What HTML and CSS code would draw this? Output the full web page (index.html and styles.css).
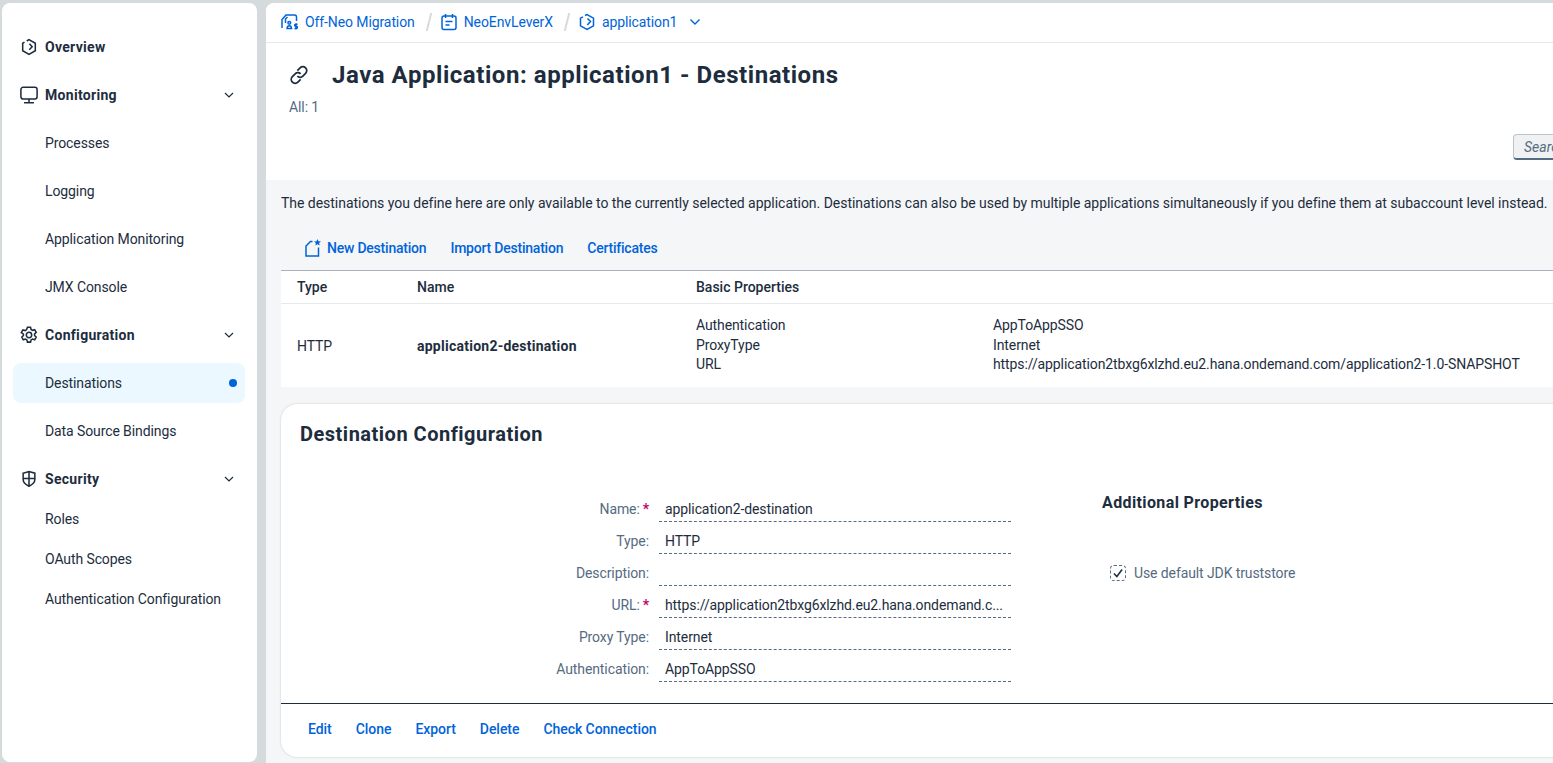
FILE: index.html
```html
<!DOCTYPE html>
<html lang="en">
<head>
<meta charset="utf-8">
<title>Destinations</title>
<link rel="stylesheet" href="styles.css">
</head>
<body>
<div class="shell">
  <nav class="side">
    <a class="nav top"><svg class="nico" viewBox="0 0 20 20"><path d="M7.500 3.300 10 1.800l7 4v8.400l-7 4-7-4V5.800l2-1.200M10.500 6.500l3 3.200-3.200 3.300"/></svg>Overview</a>
    <a class="nav top"><svg class="nico" viewBox="0 0 20 20"><rect x="1" y="1.500" width="18" height="13" rx="2.500"/><path d="M10 14.500v3.500M4.500 18.500h11"/></svg>Monitoring<svg class="chev" viewBox="0 0 12 12"><path d="M2 4l4 4 4-4"/></svg></a>
    <a class="nav sub">Processes</a>
    <a class="nav sub">Logging</a>
    <a class="nav sub">Application Monitoring</a>
    <a class="nav sub">JMX Console</a>
    <a class="nav top"><svg class="nico" viewBox="0 0 20 20"><circle cx="10" cy="10" r="3"/><path d="M8.300 1.500h3.400l.6 2.400 1.600.9 2.400-.7 1.700 3-1.800 1.700v1.800l1.800 1.700-1.700 3-2.400-.7-1.600.9-.6 2.400H8.300l-.6-2.400-1.600-.9-2.400.7-1.700-3 1.800-1.700V9.100L1.500 7.400l1.700-3 2.400.7 1.600-.9z"/></svg>Configuration<svg class="chev" viewBox="0 0 12 12"><path d="M2 4l4 4 4-4"/></svg></a>
    <a class="nav sub active">Destinations<span class="dot"></span></a>
    <a class="nav sub">Data Source Bindings</a>
    <a class="nav top last"><svg class="nico" viewBox="0 0 20 20"><path d="M3.500 3.500 10 1.800l6.500 1.700v7c0 3.500-3 5.800-6.500 7.500-3.500-1.700-6.500-4-6.500-7.500zM10 1.800V18M3.500 9.500h13"/></svg>Security<svg class="chev" viewBox="0 0 12 12"><path d="M2 4l4 4 4-4"/></svg></a>
    <a class="nav sub short">Roles</a>
    <a class="nav sub short">OAuth Scopes</a>
    <a class="nav sub short">Authentication Configuration</a>
  </nav>
  <main class="main">
    <header class="crumbs">
      <a class="crumb"><svg class="cico" viewBox="0 0 18 18"><path d="M1 15V6.500L5 2h8.500a2 2 0 0 1 2 2v4M4.500 10V6l2-2M6 15.500c.2-2 1-2.800 2.300-2.800s2.100.8 2.300 2.800z"/><circle cx="8.300" cy="9.800" r="1.400"/><path d="M16.500 11.200h-2c-1.200 0-1.200 2 0 2h1c1.200 0 1.200 2.200 0 2.200h-2M15 10.200v6.300"/></svg>Off-Neo Migration</a>
      <span class="sep"></span>
      <a class="crumb"><svg class="cico" viewBox="0 0 18 18"><rect x="2" y="3" width="14" height="13.500" rx="2"/><path d="M5.500 1v4M12.500 1v4M5.500 8.500h7M5.500 12h4"/></svg>NeoEnvLeverX</a>
      <span class="sep"></span>
      <a class="crumb"><svg class="cico" viewBox="0 0 18 18"><path d="M7 2.500 9 1.500l6.500 3.700v7.600L9 16.500l-6.500-3.700V5.200L5 3.800M9.500 5.500l3 3-3.200 3.500"/></svg>application1<svg class="cchev" viewBox="0 0 12 12"><path d="M1.500 3.500 6 8l4.500-4.500"/></svg></a>
    </header>
    <section class="head">
      <div class="titlerow">
        <svg class="link" viewBox="0 0 20 20"><path d="M8.500 6 11 3.500a3.500 3.500 0 0 1 5 5l-2.500 2.500a3.500 3.500 0 0 1-5 0M11.500 14 9 16.500a3.500 3.500 0 0 1-5-5L6.500 9a3.500 3.500 0 0 1 5 0"/></svg>
        <h1 class="title">Java Application: application1 - Destinations</h1>
      </div>
      <div class="count">All: 1</div>
      <div class="searchrow"><button class="search">Search</button></div>
    </section>
    <section class="body">
      <p class="intro">The destinations you define here are only available to the currently selected application. Destinations can also be used by multiple applications simultaneously if you define them at subaccount level instead.</p>
      <div class="tools">
        <a class="act first"><svg class="newi" viewBox="0 0 16 18"><path d="M7.500 2.500H5.500L1 7v10h12.500V8.500"/><path class="fill" d="M12.500 0l1 2.300 2.500.2-1.900 1.600.6 2.400-2.200-1.300-2.200 1.300.6-2.400L9 2.500l2.500-.2z"/></svg>New Destination</a>
        <a class="act">Import Destination</a>
        <a class="act">Certificates</a>
      </div>
      <div class="table">
        <div class="thead">
          <div class="ctype">Type</div><div class="cname">Name</div><div>Basic Properties</div>
        </div>
        <div class="trow">
          <div class="ctype">HTTP</div>
          <div class="cname strong">application2-destination</div>
          <div class="props">
            <span>Authentication</span><span>AppToAppSSO</span>
            <span>ProxyType</span><span>Internet</span>
            <span>URL</span><span>https://application2tbxg6xlzhd.eu2.hana.ondemand.com/application2-1.0-SNAPSHOT</span>
          </div>
        </div>
      </div>
      <div class="card">
        <h2 class="cardtitle">Destination Configuration</h2>
        <div class="cardbody">
          <div class="form">
            <label class="lab">Name:<i>*</i></label><div class="val">application2-destination</div>
            <label class="lab">Type:</label><div class="val">HTTP</div>
            <label class="lab">Description:</label><div class="val"></div>
            <label class="lab">URL:<i>*</i></label><div class="val">https://application2tbxg6xlzhd.eu2.hana.ondemand.c...</div>
            <label class="lab">Proxy Type:</label><div class="val">Internet</div>
            <label class="lab">Authentication:</label><div class="val">AppToAppSSO</div>
          </div>
          <div class="extra">
            <h3 class="extitle">Additional Properties</h3>
            <div class="check"><span class="box"><svg viewBox="0 0 12 12"><path d="M2.500 6.500 5 9l4.500-6"/></svg></span>Use default JDK truststore</div>
          </div>
        </div>
        <div class="foot">
          <a class="act">Edit</a><a class="act">Clone</a><a class="act">Export</a><a class="act">Delete</a><a class="act">Check Connection</a>
        </div>
      </div>
    </section>
  </main>
</div>
</body>
</html>
```

FILE: styles.css
```css
* { box-sizing: border-box; }
html, body { margin: 0; height: 100%; overflow: hidden; }
body {
  background: #f5f6f7;
  font-family: Roboto, "Noto Sans", sans-serif;
  font-size: 14px;
  letter-spacing: -.1px;
  color: #1d2d3e;
}
.shell { width: 1553px; height: 763px; display: flex; overflow: hidden; border-top: 3px solid #d5dadd; background: #d5dadd; }
.side {
  width: 255px;
  margin-left: 2px;
  height: 759px;
  flex: none;
  background: #fff;
  border-radius: 8px;
  padding: 24px 12px 0 11px;
  display: flex;
  flex-direction: column;
}
.nav {
  display: flex;
  align-items: center;
  height: 40px;
  margin-bottom: 8px;
  padding-left: 32px;
  position: relative;
  color: #1d2d3e;
  flex: none;
}
.top { font-weight: 700; letter-spacing: .3px; }
.last, .sub.short { margin-bottom: 0; }
.nico {
  position: absolute;
  left: 7px;
  top: 11px;
  width: 18px;
  height: 18px;
  fill: none;
  stroke: #1d2d3e;
  stroke-width: 1.7;
}
.chev {
  position: absolute;
  right: 10px;
  top: 14px;
  width: 12px;
  height: 12px;
  fill: none;
  stroke: #1d2d3e;
  stroke-width: 1.2;
}
.active { background: #ebf8ff; border-radius: 8px; }
.dot {
  position: absolute;
  right: 8px;
  top: 16px;
  width: 8px;
  height: 8px;
  border-radius: 50%;
  background: #0064d9;
}
.main {
  width: 1287px;
  margin-left: 9px;
  flex: none;
  border-radius: 8px 0 0 0;
  overflow: hidden;
  background: #f5f6f7;
}
.crumbs {
  height: 40px;
  background: #fff;
  border-bottom: 1px solid #e5e9ec;
  display: flex;
  align-items: center;
  padding: 0 0 2px 15px;
}
.crumb { display: flex; align-items: center; color: #0064d9; }
.cico {
  width: 18px;
  height: 18px;
  margin-right: 6px;
  fill: none;
  stroke: #0064d9;
  stroke-width: 1.5;
}
.cchev {
  width: 12px;
  height: 12px;
  margin-left: 12px;
  fill: none;
  stroke: #0064d9;
  stroke-width: 1.4;
}
.sep {
  width: 2px;
  height: 18px;
  background: #d5dadd;
  transform: skewX(-14deg);
  margin: 0 10px 0 13px;
}
.head { height: 137px; background: #fff; padding: 15px 0 0 22px; position: relative; }
.titlerow { display: flex; align-items: center; height: 34px; }
.link {
  width: 22px;
  height: 22px;
  margin-right: 22px;
  fill: none;
  stroke: #1d2d3e;
  stroke-width: 1.6;
}
.title { margin: 0; font-size: 24px; line-height: 34px; font-weight: 700; letter-spacing: .55px; color: #1d2d3e; }
.count { margin-top: 5px; margin-left: 1px; color: #556b82; line-height: 20px; }
.searchrow { position: absolute; left: 1247px; top: 91px; }
.search {
  width: 80px;
  height: 26px;
  text-align: left;
  padding: 0 0 0 10px;
  font: italic 14px Roboto, sans-serif;
  color: #556b82;
  background: #eff1f2;
  border: 1px solid #bcc3ca;
  border-bottom: 2px solid #556b82;
  border-radius: 4px;
}
.body { padding: 0 0 0 15px; }
.intro { margin: 0; padding-top: 12px; height: 46px; line-height: 22px; white-space: nowrap; letter-spacing: -.03px; color: #1d2d3e; }
.tools { display: flex; height: 44px; align-items: center; padding-left: 24px; gap: 24px; }
.act { color: #0064d9; font-weight: 500; letter-spacing: -.05px; display: flex; align-items: center; white-space: nowrap; }
.tools .act { letter-spacing: -.22px; }
.newi { width: 16px; height: 18px; margin-right: 6px; fill: none; stroke: #0064d9; stroke-width: 1.5; }
.newi .fill { fill: #0064d9; stroke: none; }
.table { background: #fff; border-top: 1px solid #a8b2bd; }
.thead {
  display: flex;
  height: 33px;
  align-items: center;
  font-weight: 500;
  letter-spacing: 0;
  border-bottom: 1px solid #e5e9ec;
}
.ctype { width: 136px; padding-left: 16px; flex: none; }
.cname { width: 279px; flex: none; }
.strong { font-weight: 700; letter-spacing: .25px; }
.trow { display: flex; align-items: center; height: 83px; }
.props {
  display: grid;
  grid-template-columns: 297px auto;
  line-height: 19.500px;
  white-space: nowrap;
}
.card {
  margin-top: 17px;
  width: 1400px;
  height: 353px;
  background: #fff;
  border-radius: 16px;
  box-shadow: 0 0 2px rgba(29, 45, 62, .25);
  display: flex;
  flex-direction: column;
}
.cardtitle { margin: 0; padding: 16px 0 0 19px; font-size: 20px; line-height: 28px; font-weight: 700; letter-spacing: .5px; height: 60px; }
.cardbody { flex: 1; display: flex; padding-top: 28px; }
.form {
  width: 821px;
  display: grid;
  grid-template-columns: 378px 352px;
  grid-auto-rows: 32px;
  align-content: start;
}
.lab {
  text-align: right;
  color: #556b82;
  line-height: 34px;
  padding-right: 10px;
}
.lab i {
  color: #c0056e;
  font-style: normal;
  font-weight: 700;
  margin-left: 3px;
}
.val {
  height: 30px;
  line-height: 34px;
  padding-left: 6px;
  border-bottom: 1px dashed #556b82;
  white-space: nowrap;
  color: #1d2d3e;
}
.extitle { margin: 0; font-size: 16px; line-height: 22px; font-weight: 700; letter-spacing: .38px; }
.check { display: flex; align-items: center; margin-top: 51px; margin-left: 8px; color: #556b82; }
.box {
  width: 16px;
  height: 16px;
  margin-right: 8px;
  border: 1px dashed #556b82;
  border-radius: 4px;
  display: flex;
}
.box svg { width: 14px; height: 14px; fill: none; stroke: #1d2d3e; stroke-width: 1.3; }
.foot {
  height: 54px;
  border-top: 1px solid #1d2d3e;
  display: flex;
  align-items: center;
  gap: 24px;
  padding: 0 0 3px 27px;
}
```
